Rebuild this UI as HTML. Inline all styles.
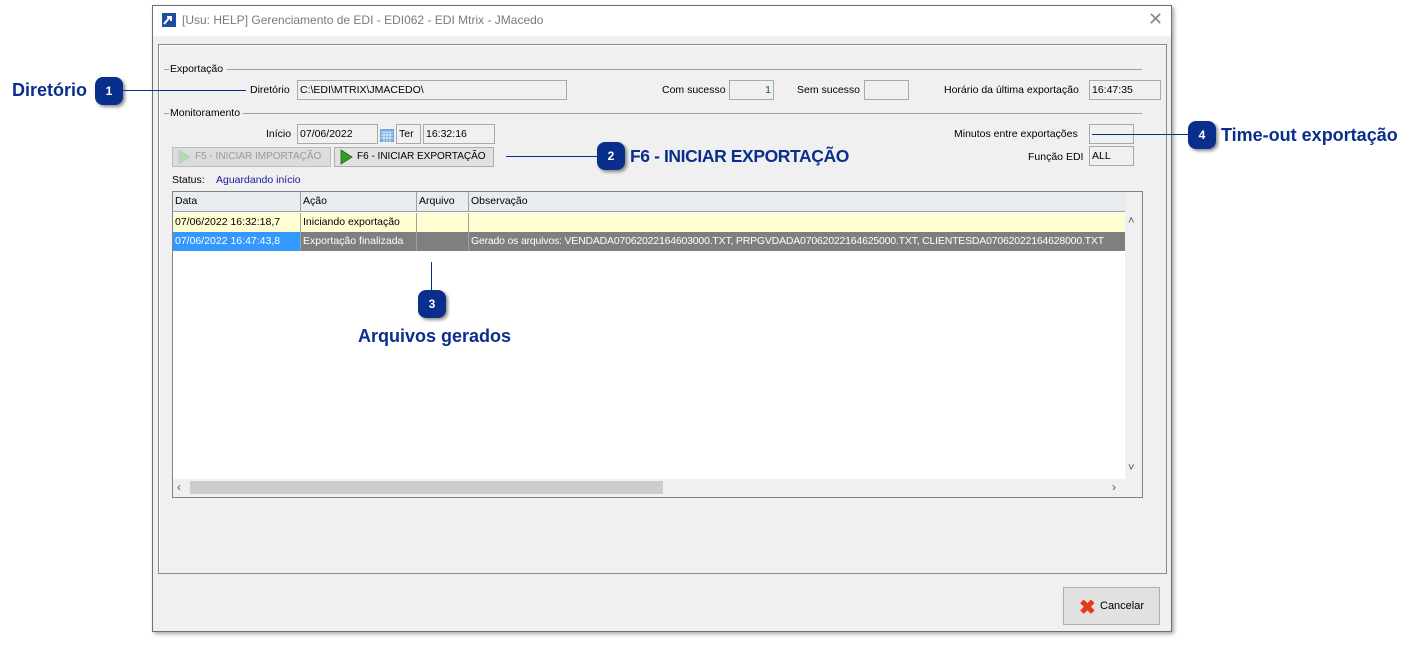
<!DOCTYPE html>
<html><head><meta charset="utf-8"><style>
*{margin:0;padding:0;box-sizing:border-box}
body{width:1417px;height:647px;background:#fff;position:relative;font-family:"Liberation Sans",sans-serif;font-size:10.5px;color:#000;overflow:hidden}
.a{position:absolute;white-space:nowrap}
.box{position:absolute;border:1px solid #a9a9a9;background:#f0f0f0;padding:2px 2px;font-size:10.5px;line-height:14px;white-space:nowrap;overflow:hidden}
.hl{position:absolute;height:1px;background:#a0a0a0}
.badge{position:absolute;width:28px;height:28px;border-radius:8px;background:#0a2e8c;color:#fff;font-weight:bold;font-size:12px;text-align:center;line-height:28px;box-shadow:2px 2px 3px rgba(0,0,0,.45)}
.call{position:absolute;font-weight:bold;color:#0a2e8c;font-size:18px;white-space:nowrap}
.ln{position:absolute;height:1px;background:#0a2e8c}
.cell{position:absolute;height:20px;line-height:19px;padding-left:2px;border-right:1px solid #a0a0a0;white-space:nowrap;overflow:hidden}
</style></head><body>
<div class="a" style="left:152px;top:5px;width:1020px;height:627px;background:#f0f0f0;border:1px solid #6f6f6f;box-shadow:2px 2px 4px rgba(0,0,0,.35)"></div>
<div class="a" style="left:153px;top:6px;width:1018px;height:30px;background:#fff"></div>
<svg class="a" style="left:162px;top:13px" width="14" height="14"><rect width="14" height="14" fill="#1d4e9e"/><path d="M2 11 L8 4 M5 4 H9 V8" stroke="#fff" stroke-width="2" fill="none"/></svg>
<div class="a" style="left:182px;top:13px;color:#7a7a7a;font-size:12px">[Usu: HELP] Gerenciamento de EDI - EDI062 - EDI Mtrix - JMacedo</div>
<div class="a" style="left:1148px;top:9px;color:#888;font-size:18px">✕</div>
<div class="a" style="left:158px;top:44px;width:1009px;height:530px;border:1px solid #8a8a8a;box-shadow:inset 1px 1px 0 #fff"></div>

<div class="hl" style="left:164px;top:69px;width:5px"></div>
<div class="a" style="left:170px;top:63px">Exportação</div>
<div class="hl" style="left:227px;top:69px;width:915px"></div>
<div class="a" style="left:250px;top:84px">Diretório</div>
<div class="box" style="left:297px;top:80px;width:270px;height:20px">C:\EDI\MTRIX\JMACEDO\</div>
<div class="a" style="left:662px;top:84px">Com sucesso</div>
<div class="box" style="left:729px;top:80px;width:45px;height:20px;text-align:right;color:#060">1</div>
<div class="a" style="left:797px;top:84px">Sem sucesso</div>
<div class="box" style="left:864px;top:80px;width:45px;height:20px"></div>
<div class="a" style="left:944px;top:84px">Horário da última exportação</div>
<div class="box" style="left:1089px;top:80px;width:72px;height:20px">16:47:35</div>

<div class="hl" style="left:164px;top:113px;width:5px"></div>
<div class="a" style="left:170px;top:107px">Monitoramento</div>
<div class="hl" style="left:243px;top:113px;width:899px"></div>
<div class="a" style="left:266px;top:128px">Início</div>
<div class="box" style="left:297px;top:124px;width:81px;height:20px">07/06/2022</div>
<svg class="a" style="left:380px;top:127px" width="14" height="15"><rect x="0" y="2" width="14" height="13" fill="#6fa8dc"/><path d="M1 5 H13 M1 8 H13 M1 11 H13 M4 5 V15 M7 5 V15 M10 5 V15" stroke="#fff" stroke-width=".8"/></svg>
<div class="box" style="left:396px;top:124px;width:25px;height:20px">Ter</div>
<div class="box" style="left:423px;top:124px;width:72px;height:20px">16:32:16</div>
<div class="a" style="left:954px;top:128px">Minutos entre exportações</div>
<div class="box" style="left:1089px;top:124px;width:45px;height:20px"></div>
<div class="a" style="left:1028px;top:151px">Função EDI</div>
<div class="box" style="left:1089px;top:146px;width:45px;height:20px">ALL</div>

<div class="a" style="left:172px;top:147px;width:159px;height:20px;border:1px solid #bdbdbd;background:#dcdcdc;color:#9a9a9a;line-height:18px;padding-left:22px;font-size:10px;overflow:hidden">F5 - INICIAR IMPORTAÇÃO</div>
<svg class="a" style="left:177px;top:149px" width="14" height="16"><path d="M2 1 L13 8 L2 15Z" fill="#b8d8b0" stroke="#9cc" stroke-width=".5"/></svg>
<div class="a" style="left:334px;top:147px;width:160px;height:20px;border:1px solid #adadad;background:#e1e1e1;line-height:18px;padding-left:22px;font-size:10px;overflow:hidden">F6 - INICIAR EXPORTAÇÃO</div>
<svg class="a" style="left:339px;top:149px" width="14" height="16"><path d="M2 1 L13 8 L2 15Z" fill="#2fa020" stroke="#1a6a10" stroke-width=".8"/></svg>

<div class="a" style="left:172px;top:174px">Status:</div>
<div class="a" style="left:216px;top:174px;color:#1a1a9c">Aguardando início</div>

<div class="a" style="left:172px;top:191px;width:971px;height:307px;border:1px solid #828282;background:#f0f0f0"></div>
<div class="a" style="left:173px;top:192px;width:952px;height:287px;background:#fff"></div>
<div class="a" style="left:173px;top:192px;width:952px;height:20px;background:#e8ebef;border-bottom:1px solid #a0a0a0"></div>
<div class="cell" style="left:173px;top:192px;width:128px">Data</div>
<div class="cell" style="left:301px;top:192px;width:116px">Ação</div>
<div class="cell" style="left:417px;top:192px;width:52px">Arquivo</div>
<div class="cell" style="left:469px;top:192px;width:656px;border:none">Observação</div>
<div class="a" style="left:173px;top:213px;width:952px;height:19px;background:#fffdd2"></div>
<div class="cell" style="left:173px;top:213px;width:128px;height:19px">07/06/2022 16:32:18,7</div>
<div class="cell" style="left:301px;top:213px;width:116px;height:19px">Iniciando exportação</div>
<div class="cell" style="left:417px;top:213px;width:52px;height:19px"></div>
<div class="a" style="left:173px;top:232px;width:952px;height:19px;background:#7f7f7f"></div>
<div class="cell" style="left:173px;top:232px;width:128px;height:19px;background:#3399ff;color:#fff">07/06/2022 16:47:43,8</div>
<div class="cell" style="left:301px;top:232px;width:116px;height:19px;color:#fff">Exportação finalizada</div>
<div class="cell" style="left:417px;top:232px;width:52px;height:19px"></div>
<div class="cell" style="left:469px;top:232px;width:656px;height:19px;color:#fff;border:none;letter-spacing:-0.2px">Gerado os arquivos: VENDADA07062022164603000.TXT, PRPGVDADA07062022164625000.TXT, CLIENTESDA07062022164628000.TXT</div>
<div class="a" style="left:1128px;top:215px;color:#555;font-size:11px">˄</div>
<div class="a" style="left:1128px;top:462px;color:#555;font-size:11px">˅</div>
<div class="a" style="left:190px;top:481px;width:473px;height:13px;background:#cdcdcd"></div>
<div class="a" style="left:177px;top:480px;color:#555;font-size:12px">‹</div>
<div class="a" style="left:1112px;top:480px;color:#555;font-size:12px">›</div>

<div class="a" style="left:1063px;top:587px;width:97px;height:38px;border:1px solid #adadad;background:#e1e1e1;line-height:36px;padding-left:36px;font-size:11px">Cancelar</div>
<div class="a" style="left:1079px;top:595px;color:#e53a1a;font-size:20px;font-weight:bold">✖</div>

<div class="call" style="left:12px;top:80px">Diretório</div>
<div class="badge" style="left:95px;top:77px">1</div>
<div class="ln" style="left:123px;top:90px;width:123px"></div>
<div class="ln" style="left:506px;top:156px;width:92px"></div>
<div class="badge" style="left:597px;top:142px">2</div>
<div class="call" style="left:630px;top:146px;font-size:17.5px;letter-spacing:-0.4px">F6 - INICIAR EXPORTAÇÃO</div>
<div class="a" style="left:431px;top:262px;width:1px;height:30px;background:#0a2e8c"></div>
<div class="badge" style="left:418px;top:290px">3</div>
<div class="call" style="left:358px;top:326px">Arquivos gerados</div>
<div class="ln" style="left:1092px;top:134px;width:96px"></div>
<div class="badge" style="left:1188px;top:121px">4</div>
<div class="call" style="left:1221px;top:125px">Time-out exportação</div>
</body></html>
